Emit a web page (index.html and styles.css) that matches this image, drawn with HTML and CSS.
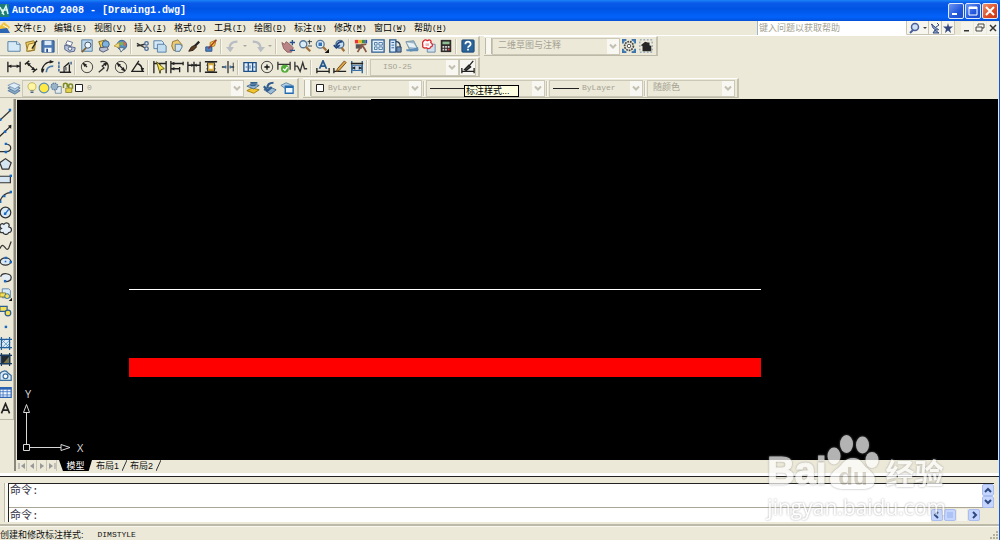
FILE: index.html
```html
<!DOCTYPE html>
<html lang="zh-CN">
<head>
<meta charset="utf-8">
<title>AutoCAD 2008 - [Drawing1.dwg]</title>
<link rel="stylesheet" href="styles.css">
</head>
<body>
<svg class="sprite" aria-hidden="true">
  <symbol id="new" viewBox="0 0 16 16"><path d="M1 3h10l4 3v8H1z" fill="#d6e9f7" stroke="#4a78a0"/><path d="M11 3v3h4" fill="#fff" stroke="#4a78a0"/></symbol>
  <symbol id="open" viewBox="0 0 16 16"><path d="M2 4l9-2 2 3-1 8-8 1z" fill="#f3cf62" stroke="#8a6d1c"/><path d="M5 6l8-2-3 9-7 1z" fill="#ffe9a0" stroke="#8a6d1c"/><path d="M12 5l3-3M9 11l4-6" stroke="#222" stroke-width="1.5"/></symbol>
  <symbol id="save" viewBox="0 0 16 16"><path d="M1 2h14v13H1z" fill="#4c78b4" stroke="#29508a"/><path d="M4 2h8v5H4z" fill="#dbe8f6"/><path d="M4 10h8v5H4z" fill="#eef4fa"/><path d="M6 11h2v4H6z" fill="#29508a"/></symbol>
  <symbol id="print" viewBox="0 0 16 16"><path d="M5 2l6 2-2 4-6-2z" fill="#fff" stroke="#55658a"/><path d="M2 7l8 2 4 1-1 4-6 1-5-3z" fill="#b9c4dd" stroke="#4b5b82"/><circle cx="8" cy="11" r="2" fill="#fff" stroke="#4b5b82"/></symbol>
  <symbol id="preview" viewBox="0 0 16 16"><path d="M2 1h12v13H2z" fill="#bcd8ee" stroke="#4a78a0"/><circle cx="9" cy="7" r="3.500" fill="#eef7ff" stroke="#345"/><path d="M7 10l-5 5" stroke="#806030" stroke-width="2"/></symbol>
  <symbol id="publish" viewBox="0 0 16 16"><path d="M2 3l8-2 3 7-8 3z" fill="#f4cd4b" stroke="#746020"/><circle cx="10" cy="6" r="4" fill="#7fb2dc" stroke="#2c5686"/><path d="M3 10l8-1 2 3-6 3-4-2z" fill="#b7bfd0" stroke="#46506e"/></symbol>
  <symbol id="globe" viewBox="0 0 16 16"><circle cx="9" cy="7" r="5.500" fill="#4f8fc8" stroke="#2b5a8c"/><path d="M7 3l4 1-1 4-4-2z" fill="#7ab35b"/><path d="M10 2l4 3-2 4z" fill="#d96a4a"/><path d="M0 8l6-4v6z" fill="#f5dc7a" stroke="#b59a3a"/><path d="M6 10l6 0-4 5z" fill="#eef3f8" stroke="#567"/></symbol>
  <symbol id="cut" viewBox="0 0 16 16"><path d="M1 5l9 5M1 8l9-2" stroke="#333" stroke-width="1.500"/><circle cx="12" cy="5" r="2" fill="none" stroke="#4a6a9a" stroke-width="1.500"/><circle cx="12" cy="11" r="2" fill="none" stroke="#4a6a9a" stroke-width="1.500"/></symbol>
  <symbol id="copy" viewBox="0 0 16 16"><path d="M1 2h9l2 2v7H1z" fill="#d6e9f7" stroke="#4a78a0"/><path d="M5 6h8l2 2v7H5z" fill="#c2dcf0" stroke="#4a78a0"/></symbol>
  <symbol id="paste" viewBox="0 0 16 16"><path d="M3 3l6-2 5 6-3 7-7-1-2-5z" fill="#edcb72" stroke="#8a6d2c"/><path d="M6 6h6l2 3-3 5H6z" fill="#cfe3f3" stroke="#4a78a0"/></symbol>
  <symbol id="brush" viewBox="0 0 16 16"><path d="M14 3L9 8" stroke="#222" stroke-width="2.500"/><path d="M9 7l2 2-4 4-5 1 3-5z" fill="#5b3d25" stroke="#2c1c10"/></symbol>
  <symbol id="block" viewBox="0 0 16 16"><path d="M7 4l7-3-2 7-5 1z" fill="#f9c33f" stroke="#ad711d"/><path d="M2 9h7v5H2z" fill="#4e83c2" stroke="#274c80"/><path d="M14 1L5 11" stroke="#933" stroke-width="1.500"/></symbol>
  <symbol id="undo" viewBox="0 0 16 16"><path d="M13 3C7 3 4 6 4 11" fill="none" stroke="#b9bcc3" stroke-width="2.500"/><path d="M0 9h9l-4 6z" fill="#b9bcc3"/></symbol>
  <symbol id="redo" viewBox="0 0 16 16"><path d="M2 3c6 0 9 3 9 8" fill="none" stroke="#b9bcc3" stroke-width="2.500"/><path d="M7 9h9l-5 6z" fill="#b9bcc3"/></symbol>
  <symbol id="pan" viewBox="0 0 16 16"><path d="M1 4l3 2 2-3 4 3 4 4-2 5H7L3 11z" fill="#b98484" stroke="#8b5a5f"/><path d="M13 1v6M10 4h6M10 13h6" stroke="#24518c" stroke-width="1.500"/></symbol>
  <symbol id="zoomrt" viewBox="0 0 16 16"><circle cx="6" cy="6" r="4" fill="#d9ecfa" stroke="#56779c" stroke-width="1.500"/><path d="M9 9l5 5" stroke="#a2713c" stroke-width="2.500"/><path d="M13 1v5M11 3h5M11 8h5" stroke="#234"/></symbol>
  <symbol id="zoomwin" viewBox="0 0 16 16"><circle cx="6" cy="6" r="4.500" fill="#d9ecfa" stroke="#56779c" stroke-width="1.500"/><path d="M4 4h4v4H4z" fill="#3873b4"/><path d="M9 9l4 4" stroke="#a2713c" stroke-width="2.500"/><path d="M16 11v5h-5z" fill="#111"/></symbol>
  <symbol id="zoomprev" viewBox="0 0 16 16"><circle cx="9" cy="6" r="4.500" fill="#c6def0" stroke="#4c6c92" stroke-width="1.500"/><path d="M12 3c-4 0-6 2-7 5M2 7l3 3 4-3" fill="none" stroke="#23477c" stroke-width="2"/><path d="M11 10l3 4" stroke="#a2713c" stroke-width="2.500"/></symbol>
  <symbol id="props" viewBox="0 0 16 16"><path d="M1 1h4v4H1z" fill="#e33"/><path d="M5 1h4v4H5z" fill="#e9b820"/><path d="M9 1h4v4H9z" fill="#3d8d48"/><path d="M13 1h2v4h-2z" fill="#34c"/><path d="M2 6h7v5H2z" fill="#555"/><path d="M4 15l5-8 3 4 2 4M8 7l6-1" stroke="#854" stroke-width="2" fill="none"/></symbol>
  <symbol id="dcenter" viewBox="0 0 16 16"><path d="M1 1h14v14H1z" fill="#e4f0fa" stroke="#2c5b90" stroke-width="1.500"/><path d="M4 4h3v3H4zM4 9h3v3H4zM9 4h4v3H9zM9 9h4v3H9z" fill="none" stroke="#44749f"/></symbol>
  <symbol id="palette" viewBox="0 0 16 16"><path d="M2 1h7v14H2z" fill="#d8e8f6" stroke="#2c5b90" stroke-width="1.500"/><path d="M4 4h3M4 7h3M4 10h3" stroke="#2c5b90"/><path d="M9 3c4 0 5 3 5 6" fill="none" stroke="#263b56" stroke-width="1.500"/><path d="M10 9h5v6h-5z" fill="#6d92bd" stroke="#263b56"/></symbol>
  <symbol id="sheet" viewBox="0 0 16 16"><path d="M1 3l9-1 5 10-9 2z" fill="#9db8c9" stroke="#748fa2"/><path d="M2 4l8 1 3 5-8-1z" fill="#e6f0f5"/><path d="M1 12l8-1 6-2v5H2z" fill="#5f8fb8"/></symbol>
  <symbol id="markup" viewBox="0 0 16 16"><path d="M6 6h9v9H6z" fill="#cedfee" stroke="#6383a4"/><path d="M2 2c2-2 4 0 4 0 3-2 5 0 4 2 3 2 2 5 0 5-1 3-4 2-5 1-3 1-5-1-4-3-1-2 0-4 1-5z" fill="#fff" stroke="#da2830" stroke-width="1.500"/><path d="M4 5h4v3H4z" fill="#f4b3b3"/></symbol>
  <symbol id="calc" viewBox="0 0 16 16"><path d="M2 1h12v14H2z" fill="#302c2b"/><path d="M4 3h8v3H4z" fill="#8ebf91"/><path d="M4 8h2v2H4zM7 8h2v2H7zM10 8h2v2h-2zM4 11h2v2H4zM7 11h2v2H7z" fill="#ddd"/><path d="M10 11h2v2h-2z" fill="#d44"/></symbol>
  <symbol id="help" viewBox="0 0 16 16"><rect x="1" y="1" width="14" height="14" rx="1" fill="#2b6499" stroke="#174574"/><path d="M5 6c0-4 6-4 6 0 0 2-3 2-3 4" fill="none" stroke="#fff" stroke-width="2"/><path d="M7 11h2v2H7z" fill="#fff"/></symbol>
  <symbol id="gear" viewBox="0 0 16 16"><path d="M1 5V1h4M11 1h4v4M15 11v4h-4M5 15H1v-4" fill="#6da0d0" stroke="#3d73ab" stroke-width="2"/><circle cx="8" cy="8" r="5" fill="#e8e6d8" stroke="#444" stroke-width="2" stroke-dasharray="2 1"/><circle cx="8" cy="8" r="2" fill="#fff" stroke="#444"/></symbol>
  <symbol id="home" viewBox="0 0 16 16"><path d="M1 1h14v14H1z" fill="none" stroke="#6083aa" stroke-dasharray="2 2"/><path d="M2 7l5-4 3 1h2v3l2 1v6H4V8z" fill="#262626"/></symbol>

  <symbol id="dlin" viewBox="0 0 16 16"><path d="M1 2v12M15 2v12M1 7h14" stroke="#222" stroke-width="1.500"/><path d="M1 7l4-2v4zM15 7l-4-2v4z" fill="#222"/></symbol>
  <symbol id="dali" viewBox="0 0 16 16"><path d="M1 5l5-4M10 14l5-4M3 3l10 9" stroke="#222" stroke-width="1.500"/><path d="M3 3l5 1-3 3zM13 12l-5-1 3-3z" fill="#222"/></symbol>
  <symbol id="darc" viewBox="0 0 16 16"><path d="M1 14C1 6 6 2 13 2" fill="none" stroke="#222" stroke-width="1.500"/><path d="M6 14c0-4 3-7 8-7" fill="none" stroke="#4a7cae" stroke-width="2"/><path d="M10 0l5 2-5 2zM0 10l2 5 2-5z" fill="#222"/></symbol>
  <symbol id="dord" viewBox="0 0 16 16"><path d="M2 14h13M7 13V8l6-5M13 5v8" fill="none" stroke="#222" stroke-width="1.500"/><path d="M1 2v11M15 2v3" fill="none" stroke="#55779e" stroke-width="2" stroke-dasharray="3 1"/><path d="M6 8h4v4H6z" fill="#777"/></symbol>
  <symbol id="drad" viewBox="0 0 16 16"><circle cx="8" cy="8" r="6.500" fill="none" stroke="#333"/><path d="M8 8L4 4" stroke="#222" stroke-width="1.500"/><path d="M3 3l5 2-3 3z" fill="#222"/></symbol>
  <symbol id="djog" viewBox="0 0 16 16"><path d="M4 2c8-2 11 5 7 11M2 14l6-5-2-2 5-4" fill="none" stroke="#333" stroke-width="1.500"/><path d="M12 3l-5 1 3 3z" fill="#222"/></symbol>
  <symbol id="ddia" viewBox="0 0 16 16"><circle cx="8" cy="8" r="6.500" fill="none" stroke="#333"/><path d="M4 4l8 8" stroke="#222" stroke-width="1.500"/><path d="M3 3l5 2-3 3zM13 13l-5-2 3-3z" fill="#222"/></symbol>
  <symbol id="dang" viewBox="0 0 16 16"><path d="M9 1L1 13h14M7 4c4 1 6 4 6 9" fill="none" stroke="#222" stroke-width="1.500"/><path d="M11 9l4 0-2 5z" fill="#222"/></symbol>
  <symbol id="dqui" viewBox="0 0 16 16"><path d="M1 1v14M15 1v14M8 5v10M1 4h14" stroke="#222" stroke-width="1.500"/><path d="M4 2l9 8-4 1-1 4z" fill="#f3e148" stroke="#5a5014"/></symbol>
  <symbol id="dbas" viewBox="0 0 16 16"><path d="M1 1v14M15 2v4M11 8v6M1 4h14M1 10h10" stroke="#222" stroke-width="1.500"/><path d="M1 4l4-2v4zM1 10l4-2v4z" fill="#222"/></symbol>
  <symbol id="dcon" viewBox="0 0 16 16"><path d="M1 2v12M8 2v12M15 2v12M1 6h14" stroke="#222" stroke-width="1.500"/><path d="M8 6L5 4v4zM8 6l3-2v4z" fill="#222"/></symbol>
  <symbol id="dspa" viewBox="0 0 16 16"><path d="M1 2h14M1 14h14M3 6h10M3 10h10" stroke="#222" stroke-width="1.500"/><path d="M4 3h8v10H4z" fill="#d7b04a" stroke="#333"/><path d="M6 6h4v4H6z" fill="#fff"/></symbol>
  <symbol id="dbrk" viewBox="0 0 16 16"><path d="M8 1v14M1 8h5M10 8h5" stroke="#333" stroke-width="1.500"/><path d="M2 8l4-2v4zM14 8l-4-2v4z" fill="#48739c"/><path d="M14 3v10" stroke="#333"/></symbol>
  <symbol id="tol" viewBox="0 0 16 16"><path d="M1 3h14v10H1zM6 3v10M11 3v10" fill="#e2effa" stroke="#1e5088" stroke-width="1.500"/><path d="M3 8h2M8 6v4M12 8h2" stroke="#1e5088"/></symbol>
  <symbol id="ctr" viewBox="0 0 16 16"><circle cx="8" cy="8" r="6.500" fill="none" stroke="#333"/><path d="M5 8h6M8 5v6" stroke="#111" stroke-width="1.500"/></symbol>
  <symbol id="insp" viewBox="0 0 16 16"><path d="M1 2v9M15 2v9M1 5h14" stroke="#333" stroke-width="1.500"/><circle cx="9" cy="10" r="4.500" fill="#52ae38"/><path d="M7 10l2 2 3-4" fill="none" stroke="#fff" stroke-width="1.500"/></symbol>
  <symbol id="jog" viewBox="0 0 16 16"><path d="M1 2v10M1 7h3l3 6 3-10 2 7h3" fill="none" stroke="#333" stroke-width="1.500"/></symbol>
  <symbol id="dedit" viewBox="0 0 16 16"><path d="M1 9v6M15 9v6M1 13h14" stroke="#222" stroke-width="1.500"/><path d="M4 10l4-9 4 9M5 7h6" fill="none" stroke="#24588f" stroke-width="2"/></symbol>
  <symbol id="dtedit" viewBox="0 0 16 16"><path d="M1 9v6M1 13h14" stroke="#222" stroke-width="1.500"/><path d="M13 1l2 2-8 9-3 1 1-3z" fill="#dba441" stroke="#69451c"/></symbol>
  <symbol id="dupd" viewBox="0 0 16 16"><path d="M2 1v14M14 1v14" stroke="#245f9a" stroke-width="1.500"/><path d="M1 4h14M4 9h8" stroke="#222" stroke-width="1.500"/><path d="M3 6h10v6H3z" fill="#c6dced" stroke="#245f9a"/><path d="M2 9l4-2v4zM14 9l-4-2v4z" fill="#222"/></symbol>
  <symbol id="dsty" viewBox="0 0 16 16"><path d="M1 9v6M15 9v6M1 13h14" stroke="#222" stroke-width="1.500"/><path d="M14 1L9 7M9 6l2 2-5 4-2-1z" fill="#555" stroke="#222" stroke-width="1.500"/></symbol>

  <symbol id="layers" viewBox="0 0 16 16"><path d="M1 11l7-3 7 3-6 4z" fill="#87a8c5" stroke="#58799b"/><path d="M1 8l7-3 7 3-6 4z" fill="#b4cfe4" stroke="#58799b"/><path d="M1 5l7-3 7 3-6 4z" fill="#e0edf6" stroke="#7998b5"/></symbol>
  <symbol id="laycur" viewBox="0 0 16 16"><path d="M1 11l6-3 8 2-6 4z" fill="#f3c62d" stroke="#987710"/><path d="M1 6l6-3 8 2-6 4z" fill="#9cbcd6" stroke="#45688c"/><path d="M5 2h8M5 5h6" stroke="#35618d" stroke-width="2"/></symbol>
  <symbol id="layprev" viewBox="0 0 16 16"><path d="M1 10l7-3 7 3-6 5z" fill="#9cbcd6" stroke="#45688c"/><path d="M12 2C7 2 5 4 5 8M1 6l4 5 5-4" fill="none" stroke="#315c8e" stroke-width="2.500"/></symbol>
  <symbol id="laystate" viewBox="0 0 16 16"><path d="M1 5l6-3 7 3-6 5z" fill="#b3cfe3" stroke="#5b81a4"/><path d="M6 6h9v8H6z" fill="#f2f8ff" stroke="#236baf" stroke-width="1.500"/><path d="M6 7h9" stroke="#236baf" stroke-width="2"/></symbol>
  <symbol id="bulb" viewBox="0 0 16 16"><path d="M5 11C0 5 4 1 8 1s8 4 3 10z" fill="#fff6a4" stroke="#b8a440"/><path d="M6 12h4M6 14h4" stroke="#4e6285" stroke-width="1.500"/></symbol>
  <symbol id="sun" viewBox="0 0 16 16"><circle cx="8" cy="8" r="6.500" fill="#ffe944" stroke="#5a8daf" stroke-width="1.500"/></symbol>
  <symbol id="sunvp" viewBox="0 0 16 16"><path d="M7 6h8v9H7z" fill="#e3ebf1" stroke="#61798f"/><circle cx="6" cy="6" r="4.500" fill="#98b2c6" stroke="#5a7ca0" stroke-width="1.500" stroke-dasharray="2 1"/></symbol>
  <symbol id="lock" viewBox="0 0 16 16"><path d="M2 8V4c0-3 5-3 5 0v3M9 8V5c0-3 5-3 5 0v4" fill="none" stroke="#7b8b22" stroke-width="2"/><path d="M5 8h8v6H5z" fill="#e2d348" stroke="#817923"/></symbol>
  <symbol id="swatch" viewBox="0 0 10 10"><path d="M1.500 1.500h7v7h-7z" fill="#fff" stroke="#222"/></symbol>
  <symbol id="chev" viewBox="0 0 10 10"><path d="M2 3l3 3 3-3" fill="none" stroke="currentColor" stroke-width="2"/></symbol>

  <symbol id="line" viewBox="0 0 16 16"><path d="M1 15L14 3" stroke="#333" stroke-width="1.500"/><path d="M12 1h3v3h-3zM0 13h3v3H0z" fill="#1769c2"/></symbol>
  <symbol id="xline" viewBox="0 0 16 16"><path d="M0 16L15 2" stroke="#222" stroke-width="1.500"/><path d="M15 1v5l-4-4z" fill="#222"/><path d="M6 8h3v3H6z" fill="#1769c2"/></symbol>
  <symbol id="pline" viewBox="0 0 16 16"><path d="M0 13h9c7 0 7-8 1-9" fill="none" stroke="#333" stroke-width="1.500"/><path d="M7 2h3v3H7zM7 12h3v3H7z" fill="#1769c2"/></symbol>
  <symbol id="poly" viewBox="0 0 16 16"><path d="M8 2l7 5-3 8H4L1 7z" fill="#d5e5f1" stroke="#333" stroke-width="1.500"/></symbol>
  <symbol id="rect" viewBox="0 0 16 16"><path d="M0 4h14v8H0z" fill="#d5e5f1" stroke="#333" stroke-width="1.500"/><path d="M13 2h3v3h-3z" fill="#1769c2"/></symbol>
  <symbol id="arc" viewBox="0 0 16 16"><path d="M1 16C2 8 6 4 15 3" fill="none" stroke="#333" stroke-width="1.500"/><path d="M13 1h3v3h-3zM5 6h3v3H5zM0 13h3v3H0z" fill="#1769c2"/></symbol>
  <symbol id="circle" viewBox="0 0 16 16"><circle cx="8" cy="8" r="6.500" fill="#d9eaf6" stroke="#333" stroke-width="1.500"/><path d="M8 9l4-5" stroke="#1769c2" stroke-width="1.500"/><path d="M6 8h3v3H6z" fill="#1769c2"/></symbol>
  <symbol id="cloud" viewBox="0 0 16 16"><path d="M3 8C-1 5 3 0 6 3c3-4 8-1 6 3 5 1 4 7 0 7-2 4-7 2-7 0-5 1-5-4-2-5z" fill="#e4eef6" stroke="#333" stroke-width="1.500"/></symbol>
  <symbol id="spline" viewBox="0 0 16 16"><path d="M1 12C6 0 8 18 12 11l3-8" fill="none" stroke="#333" stroke-width="1.500"/></symbol>
  <symbol id="ellipse" viewBox="0 0 16 16"><ellipse cx="8" cy="8" rx="6.500" ry="4.500" fill="#dbe9f4" stroke="#333" stroke-width="1.500"/><path d="M7 2h3v3H7zM13 7h3v3h-3zM7 7h2v2H7z" fill="#1769c2"/></symbol>
  <symbol id="earc" viewBox="0 0 16 16"><path d="M2 7c2-6 13-4 13 1 0 4-4 5-7 5" fill="#e4eef6" stroke="#333" stroke-width="1.500"/><path d="M6 11h3v3H6z" fill="#1769c2"/></symbol>
  <symbol id="insert" viewBox="0 0 16 16"><path d="M4 1h8l2 2v9H4z" fill="#d6e9f7" stroke="#4a78a0"/><path d="M1 6h7v5H1z" fill="#f5df56" stroke="#796e24"/><circle cx="10" cy="10" r="3" fill="#f5df56" stroke="#1b62a2"/><path d="M16 12v4h-4z" fill="#111"/></symbol>
  <symbol id="mkblock" viewBox="0 0 16 16"><path d="M1 3h9v6H1z" fill="#f5df56" stroke="#2e608e" stroke-width="1.500"/><circle cx="11" cy="11" r="3.500" fill="#f5df56" stroke="#2e608e" stroke-width="1.500"/></symbol>
  <symbol id="point" viewBox="0 0 16 16"><path d="M7 7h3v3H7z" fill="#1769c2"/></symbol>
  <symbol id="hatch" viewBox="0 0 16 16"><path d="M2 2h12v12H2z" fill="#dcebf7"/><path d="M3 14L14 3M2 9l7-7M7 14l7-7M3 3l11 11" stroke="#5d92c2"/><path d="M3 0v16M13 0v16M0 3h16M0 13h16" stroke="#245f9a" stroke-width="1.500"/></symbol>
  <symbol id="grad" viewBox="0 0 16 16"><path d="M2 2h12v12H2z" fill="#232931"/><path d="M13 4v9H5z" fill="#7d7748"/><path d="M3 0v16M13 0v16M0 3h16M0 13h16" stroke="#173b62" stroke-width="1.500"/></symbol>
  <symbol id="region" viewBox="0 0 16 16"><path d="M1 14V6c2-4 8-5 10-1l4 3v6z" fill="#dbeaf6" stroke="#386c9b" stroke-width="1.500"/><circle cx="8" cy="9" r="3" fill="#fff" stroke="#386c9b" stroke-width="1.500"/></symbol>
  <symbol id="table" viewBox="0 0 16 16"><path d="M1 2h14v12H1z" fill="#f2f7ff" stroke="#2c63b0" stroke-width="1.500"/><path d="M1 3h14" stroke="#2c63b0" stroke-width="3"/><path d="M1 7h14M1 11h14M5 4v10M10 4v10" stroke="#3a70c0"/></symbol>
  <symbol id="mtext" viewBox="0 0 16 16"><path d="M3 14L8 2l5 12M5 10h6" fill="none" stroke="#222" stroke-width="2"/></symbol>
</svg>

<header class="titlebar">
  <svg class="app-icon" viewBox="0 0 12 14" aria-hidden="true"><path d="M0 0h9v13H0z" fill="#1b7d73"/><path d="M0 3l4 8M2 10l4-8 2 8M1 6h7" stroke="#d9f5ef" stroke-width="1.500" fill="none"/></svg>
  <h1 class="title">AutoCAD 2008 - [Drawing1.dwg]</h1>
  <div class="win-buttons">
    <button class="win" aria-label="最小化"><svg viewBox="0 0 14 14"><path d="M3 9h5v2H3z" fill="#fff"/></svg></button>
    <button class="win" aria-label="最大化"><svg viewBox="0 0 14 14"><path d="M3 3h8v8H3z" fill="none" stroke="#fff"/><path d="M3 3h8v2H3z" fill="#fff"/></svg></button>
    <button class="win win-close" aria-label="关闭"><svg viewBox="0 0 14 14"><path d="M3 3l8 8M11 3l-8 8" stroke="#fff" stroke-width="2"/></svg></button>
  </div>
</header>

<div class="frame">
<nav class="menubar">
  <svg class="doc-icon" viewBox="0 0 12 14" aria-hidden="true"><path d="M0 5l4-4 6 5-3 4-7 1z" fill="#f1c33a"/><path d="M0 8l7-1 3 5H0z" fill="#2c66b5"/><path d="M3 4l5 3" stroke="#fff"/></svg>
  <div class="menus">
    <button>文件<span>(<u>F</u>)</span></button><button>编辑<span>(<u>E</u>)</span></button><button>视图<span>(<u>V</u>)</span></button><button>插入<span>(<u>I</u>)</span></button><button>格式<span>(<u>O</u>)</span></button><button>工具<span>(<u>T</u>)</span></button><button>绘图<span>(<u>D</u>)</span></button><button>标注<span>(<u>N</u>)</span></button><button>修改<span>(<u>M</u>)</span></button><button>窗口<span>(<u>W</u>)</span></button><button>帮助<span>(<u>H</u>)</span></button>
  </div>
  <input class="ask" type="text" placeholder="键入问题以获取帮助" aria-label="键入问题以获取帮助">
  <div class="info">
    <button class="info-search" aria-label="搜索"><svg viewBox="0 0 20 12"><circle cx="7" cy="5" r="3.500" fill="#cfe0f4" stroke="#4a609c" stroke-width="1.500"/><path d="M5 8l-3 3" stroke="#4a609c" stroke-width="2"/><path d="M15 5h4l-2 2z" fill="#444"/></svg></button>
    <button aria-label="通讯中心"><svg viewBox="0 0 12 12"><path d="M2 2l8 6M3 2c0 4 2 6 6 6M6 8l-2 3h6z" fill="#8ba0c4" stroke="#344c85"/><path d="M8 1l2 2-3 2" fill="none" stroke="#344c85"/></svg></button>
    <button aria-label="收藏夹"><svg viewBox="0 0 12 12"><path d="M6 1l1 3.500h4L8 7l1 4-3-2.500L3 11l1-4-3-2.500h4z" fill="#31477e"/></svg></button>
  </div>
  <div class="mdi">
    <button aria-label="最小化图形"><svg viewBox="0 0 12 12"><path d="M3 8h5v1.500H3z" fill="#333"/></svg></button>
    <button aria-label="还原图形"><svg viewBox="0 0 12 12"><path d="M4 4V2h6v4H8M2 5h6v4H2z" fill="none" stroke="#444"/></svg></button>
    <button aria-label="关闭图形"><svg viewBox="0 0 12 12"><path d="M3 3l6 6M9 3L3 9" stroke="#333" stroke-width="1.500"/></svg></button>
  </div>
</nav>

<div class="dock">
  <div class="bar">
    <div class="tools">
      <button aria-label="新建"><svg><use href="#new"/></svg></button><button aria-label="打开"><svg><use href="#open"/></svg></button><button aria-label="保存"><svg><use href="#save"/></svg></button><i class="sep"></i>
      <button aria-label="打印"><svg><use href="#print"/></svg></button><button aria-label="打印预览"><svg><use href="#preview"/></svg></button><button aria-label="发布"><svg><use href="#publish"/></svg></button><button aria-label="三维 DWF"><svg><use href="#globe"/></svg></button><i class="sep"></i>
      <button aria-label="剪切"><svg><use href="#cut"/></svg></button><button aria-label="复制"><svg><use href="#copy"/></svg></button><button aria-label="粘贴"><svg><use href="#paste"/></svg></button><button aria-label="特性匹配"><svg><use href="#brush"/></svg></button><button aria-label="块编辑器"><svg><use href="#block"/></svg></button><i class="sep"></i>
      <button aria-label="放弃"><svg><use href="#undo"/></svg></button><button class="caret" aria-label="放弃列表"></button><button aria-label="重做"><svg><use href="#redo"/></svg></button><button class="caret" aria-label="重做列表"></button><i class="sep"></i>
      <button aria-label="实时平移"><svg><use href="#pan"/></svg></button><button aria-label="实时缩放"><svg><use href="#zoomrt"/></svg></button><button aria-label="窗口缩放"><svg><use href="#zoomwin"/></svg></button><button aria-label="缩放上一个"><svg><use href="#zoomprev"/></svg></button><i class="sep"></i>
      <button aria-label="特性"><svg><use href="#props"/></svg></button><button aria-label="设计中心"><svg><use href="#dcenter"/></svg></button><button aria-label="工具选项板"><svg><use href="#palette"/></svg></button><button aria-label="图纸集"><svg><use href="#sheet"/></svg></button><button aria-label="标记集"><svg><use href="#markup"/></svg></button><button aria-label="计算器"><svg><use href="#calc"/></svg></button><i class="sep"></i>
      <button aria-label="帮助"><svg><use href="#help"/></svg></button>
    </div>
    <div class="tools grip">
      <span class="combo combo-workspace"><select aria-label="工作空间" disabled><option>二维草图与注释</option></select><svg class="drop"><use href="#chev"/></svg></span>
      <button aria-label="工作空间设置"><svg><use href="#gear"/></svg></button><button aria-label="我的工作空间"><svg><use href="#home"/></svg></button>
    </div>
  </div>

  <div class="bar">
    <div class="tools">
      <button aria-label="线性"><svg><use href="#dlin"/></svg></button><button aria-label="对齐"><svg><use href="#dali"/></svg></button><button aria-label="弧长"><svg><use href="#darc"/></svg></button><button aria-label="坐标"><svg><use href="#dord"/></svg></button><i class="sep"></i>
      <button aria-label="半径"><svg><use href="#drad"/></svg></button><button aria-label="折弯"><svg><use href="#djog"/></svg></button><button aria-label="直径"><svg><use href="#ddia"/></svg></button><button aria-label="角度"><svg><use href="#dang"/></svg></button><i class="sep"></i>
      <button aria-label="快速标注"><svg><use href="#dqui"/></svg></button><button aria-label="基线"><svg><use href="#dbas"/></svg></button><button aria-label="连续"><svg><use href="#dcon"/></svg></button><button aria-label="标注间距"><svg><use href="#dspa"/></svg></button><button aria-label="标注打断"><svg><use href="#dbrk"/></svg></button><i class="sep"></i>
      <button aria-label="公差"><svg><use href="#tol"/></svg></button><button aria-label="圆心标记"><svg><use href="#ctr"/></svg></button><button aria-label="检验"><svg><use href="#insp"/></svg></button><button aria-label="折弯线性"><svg><use href="#jog"/></svg></button><i class="sep"></i>
      <button aria-label="编辑标注"><svg><use href="#dedit"/></svg></button><button aria-label="编辑标注文字"><svg><use href="#dtedit"/></svg></button><button aria-label="标注更新"><svg><use href="#dupd"/></svg></button><i class="sep"></i>
      <span class="combo combo-dim"><select aria-label="标注样式控制" disabled><option>ISO-25</option></select><svg class="drop"><use href="#chev"/></svg></span>
      <button class="hot" aria-label="标注样式"><svg><use href="#dsty"/></svg></button>
    </div>
  </div>

  <div class="bar">
    <div class="tools">
      <button aria-label="图层特性管理器"><svg><use href="#layers"/></svg></button>
      <span class="combo combo-layer"><svg><use href="#bulb"/></svg><svg><use href="#sun"/></svg><svg><use href="#sunvp"/></svg><svg><use href="#lock"/></svg><svg class="small"><use href="#swatch"/></svg><select aria-label="图层" disabled><option>0</option></select><svg class="drop"><use href="#chev"/></svg></span>
      <button aria-label="置为当前图层"><svg><use href="#laycur"/></svg></button><button aria-label="上一个图层"><svg><use href="#layprev"/></svg></button><button aria-label="图层状态"><svg><use href="#laystate"/></svg></button>
    </div>
    <div class="tools grip">
      <span class="combo combo-color"><svg class="small"><use href="#swatch"/></svg><select aria-label="颜色" disabled><option>ByLayer</option></select><svg class="drop"><use href="#chev"/></svg></span>
      <i class="sep"></i>
      <span class="combo combo-ltype"><i class="rule rule-long"></i><select aria-label="线型" disabled><option></option></select><svg class="drop"><use href="#chev"/></svg><span class="tooltip" role="tooltip">标注样式...</span></span>
      <i class="sep"></i>
      <span class="combo combo-lweight"><i class="rule"></i><select aria-label="线宽" disabled><option>ByLayer</option></select><svg class="drop"><use href="#chev"/></svg></span>
      <i class="sep"></i>
      <span class="combo combo-plot"><select aria-label="打印样式" disabled><option>随颜色</option></select><svg class="drop"><use href="#chev"/></svg></span>
    </div>
  </div>
</div>

<main class="work">
  <aside class="side">
    <div class="draw">
      <button aria-label="直线"><svg><use href="#line"/></svg></button>
      <button aria-label="构造线"><svg><use href="#xline"/></svg></button>
      <button aria-label="多段线"><svg><use href="#pline"/></svg></button>
      <button aria-label="正多边形"><svg><use href="#poly"/></svg></button>
      <button aria-label="矩形"><svg><use href="#rect"/></svg></button>
      <button aria-label="圆弧"><svg><use href="#arc"/></svg></button>
      <button aria-label="圆"><svg><use href="#circle"/></svg></button>
      <button aria-label="修订云线"><svg><use href="#cloud"/></svg></button>
      <button aria-label="样条曲线"><svg><use href="#spline"/></svg></button>
      <button aria-label="椭圆"><svg><use href="#ellipse"/></svg></button>
      <button aria-label="椭圆弧"><svg><use href="#earc"/></svg></button>
      <button aria-label="插入块"><svg><use href="#insert"/></svg></button>
      <button aria-label="创建块"><svg><use href="#mkblock"/></svg></button>
      <button aria-label="点"><svg><use href="#point"/></svg></button>
      <button aria-label="图案填充"><svg><use href="#hatch"/></svg></button>
      <button aria-label="渐变色"><svg><use href="#grad"/></svg></button>
      <button aria-label="面域"><svg><use href="#region"/></svg></button>
      <button aria-label="表格"><svg><use href="#table"/></svg></button>
      <button aria-label="多行文字"><svg><use href="#mtext"/></svg></button>
    </div>
  </aside>
  <section class="view">
    <div class="canvas">
      <svg class="drawing" role="img" aria-label="图形">
        <path d="M0 0h354" stroke="#c8c6bc" stroke-width="2"/>
        <path d="M112 190.500h632" stroke="#fff"/>
        <path d="M112 259h632v19H112z" fill="#f00"/>
      </svg>
      <svg class="ucs" viewBox="0 0 70 74" role="img" aria-label="坐标系">
        <g fill="none" stroke="#d8d8d8"><path d="M6.500 58.500h6v6h-6zM9.500 58V27M13 61.500h31M9.500 18.500l-3 8h6zM53 61.500l-9-3v6z"/></g>
        <text x="8" y="12">Y</text><text x="60" y="66">X</text>
      </svg>
    </div>
    <div class="tabs">
      <div class="tab-nav">
        <button aria-label="第一个"><svg viewBox="0 0 10 10"><path d="M2 2v6" stroke="#999"/><path d="M8 2v6L4 5z" fill="#999"/></svg></button><button aria-label="上一个"><svg viewBox="0 0 10 10"><path d="M7 2v6L3 5z" fill="#999"/></svg></button><button aria-label="下一个"><svg viewBox="0 0 10 10"><path d="M3 2v6l4-3z" fill="#999"/></svg></button><button aria-label="最后一个"><svg viewBox="0 0 10 10"><path d="M8 2v6" stroke="#999"/><path d="M2 2v6l4-3z" fill="#999"/></svg></button>
      </div>
      <button class="tab tab-on">模型</button>
      <button class="tab">布局1</button><svg class="slash" viewBox="0 0 5 11"><path d="M0 11L5 0" stroke="#333"/></svg>
      <button class="tab">布局2</button><svg class="slash" viewBox="0 0 5 11"><path d="M0 11L5 0" stroke="#333"/></svg>
    </div>
  </section>
</main>

<section class="command">
  <div class="cmd-box">
    <div class="history"><p>命令:</p>
      <div class="vscroll"><button class="scroll" aria-label="向上"><svg viewBox="0 0 10 10"><path d="M2 7l3-3 3 3" fill="none" stroke="#2c4a80" stroke-width="2"/></svg></button><button class="scroll" aria-label="向下"><svg viewBox="0 0 10 10"><path d="M2 3l3 3 3-3" fill="none" stroke="#2c4a80" stroke-width="2"/></svg></button></div>
    </div>
    <div class="prompt"><label for="cmd">命令:</label><input id="cmd" type="text">
      <div class="hscroll"><button class="scroll" aria-label="向左"><svg viewBox="0 0 10 10"><path d="M6 2L3 5l3 3" fill="none" stroke="#2c4a80" stroke-width="2"/></svg></button><button class="scroll" aria-label="滑块"><svg viewBox="0 0 10 10"><path d="M3 2v6M5 2v6M7 2v6" stroke="#95b0ee"/></svg></button><i class="track"></i><button class="scroll" aria-label="向右"><svg viewBox="0 0 10 10"><path d="M4 2l3 3-3 3" fill="none" stroke="#2c4a80" stroke-width="2"/></svg></button></div>
    </div>
  </div>
</section>

<footer class="status"><span>创建和修改标注样式:</span><span class="mono">DIMSTYLE</span>
  <svg class="size-grip" viewBox="0 0 10 10" aria-hidden="true"><path d="M7 1h2v2H7zM4 4h2v2H4zM7 4h2v2H7zM1 7h2v2H1zM4 7h2v2H4zM7 7h2v2H7z" fill="#b5b19c"/></svg>
</footer>
</div>

<div class="watermark" aria-hidden="true">
  <div class="brand"><span class="latin">Bai</span>
    <svg class="paw" viewBox="0 0 54 56"><g fill="#fff"><ellipse cx="8" cy="22" rx="6.500" ry="8.500"/><ellipse cx="20.500" cy="10" rx="6.500" ry="9"/><ellipse cx="36.500" cy="11" rx="6.500" ry="8.500"/><ellipse cx="46" cy="26" rx="6.500" ry="8"/><path d="M27 24c8 0 9 6 14 10 6 5 10 9 7 16-3 6-12 5-21 5S9 56 5 50c-3-7 1-12 7-16 5-4 7-10 15-10z"/></g><text x="27" y="51">du</text></svg>
    <span class="han">经验</span></div>
  <div class="url">jingyan.baidu.com</div>
</div>
</body>
</html>
```
FILE: styles.css
```css
* { box-sizing: border-box; }
body {
  margin: 0;
  min-height: 100vh;
  display: flex;
  flex-direction: column;
  overflow: hidden;
  position: relative;
  background: #ece9d8;
  color: #111;
  font: 9px/12px "Liberation Sans", "Noto Sans CJK SC", sans-serif;
}
button, input, select {
  font: inherit;
  color: inherit;
  border: 0;
  padding: 0;
  margin: 0;
  background: none;
  border-radius: 0;
}
button { display: flex; align-items: center; justify-content: center; }
.sprite { display: none; }

/* Title bar */
.titlebar {
  height: 21px;
  display: flex;
  align-items: center;
  flex: none;
  background: linear-gradient(#1c84f8 0, #0a5ae8 3px, #0054e3 9px, #0262fb 17px, #0450d8 21px);
}
.app-icon { width: 12px; height: 14px; }
.title {
  flex: 1;
  margin: 0;
  font: bold 10px/20px "Liberation Mono", monospace;
  color: #fff;
}
.win-buttons { display: flex; gap: 1px; padding-right: 2px; }
.win {
  width: 16px;
  height: 16px;
  border: 1px solid #dfe9fc;
  border-radius: 2px;
  background: linear-gradient(135deg, #6e96f4, #2157dc 60%, #1c4cc8);
}
.win svg { width: 14px; height: 14px; flex: none; }
.win-close { background: linear-gradient(135deg, #f0936c, #dd4a22 60%, #c63a14); }

.frame {
  flex: 1;
  display: flex;
  flex-direction: column;
  border-right: 1px solid #1556d8;
}

/* Menu bar */
.menubar {
  height: 15px;
  flex: none;
  display: flex;
  border-bottom: 1px solid #fff;
}
.doc-icon { width: 12px; height: 14px; }
.menus { flex: 1; display: flex; }
.menus button { width: 40px; justify-content: flex-start; padding-left: 2px; color: #000; }
.menus span { font: 8px/12px "Liberation Mono", monospace; }
.ask { width: 149px; background: #fff; border-left: 1px solid #9db6cc; padding-left: 1px; }
.ask::placeholder { color: #a29f90; opacity: 1; }
.info { display: flex; border: 1px solid #c9c5b2; border-top: 0; border-radius: 0 0 2px 2px; background: #f6f5ee; }
.info button { width: 13px; border-left: 1px solid #c9c5b2; }
.info .info-search { width: 21px; border-left: 0; }
.info svg { height: 12px; width: 12px; flex: none; }
.info .info-search svg { width: 20px; }
.mdi { display: flex; gap: 1px; padding: 1px 0 1px 6px; }
.mdi button { width: 12px; background: #f5f4ec; }
.mdi svg { width: 12px; height: 12px; }

/* Toolbars */
.dock { flex: none; display: flex; flex-direction: column; }
.bar { display: flex; gap: 4px; height: 21px; }
.tools {
  display: flex;
  align-items: center;
  height: 20px;
  padding: 0 2px 0 5px;
  border-top: 1px solid #fff;
  border-right: 2px solid #c5c2b0;
  border-bottom: 1px solid #bcb9a8;
}
.grip { padding-left: 8px; position: relative; }
.grip::before {
  content: "";
  position: absolute;
  left: 1px;
  top: 1px;
  bottom: 1px;
  width: 5px;
  border: 1px solid #bcb9a8;
  border-width: 0 1px;
  background: #f8f7f0;
}
.tools button { width: 17px; height: 17px; }
.tools svg { width: 14px; height: 14px; flex: none; }
.tools .caret { width: 8px; }
.caret::after { content: ""; border: 2px solid transparent; border-top-color: #aaa79a; margin-top: 2px; }
.sep { width: 2px; height: 15px; margin: 0 2px 0 1px; border-left: 1px solid #c8c5b4; border-right: 1px solid #f8f7f0; }
.grip .sep { margin: 0 1px; }
.tools .hot { background: #f7f6f0; border: 1px solid #c6c3b2; }
.combo {
  position: relative;
  display: flex;
  align-items: center;
  height: 17px;
  padding-left: 3px;
  border: 1px solid #cbc8b8;
  color: #a5a294;
}
.combo select {
  flex: 1;
  min-width: 0;
  appearance: none;
  opacity: 1;
  padding-left: 3px;
  font: 8px/12px "Liberation Mono", "Noto Sans CJK SC", monospace;
  color: #a5a294;
}
.tools .drop { width: 12px; height: 15px; padding: 2px 1px; background: #f8f7f2; color: #c3c0b2; }
.tools .combo svg:not(.drop) { width: 12px; height: 12px; }
.tools .combo svg.small:not(.drop) { width: 10px; height: 10px; }
.combo-workspace { width: 128px; }
.combo-workspace select, .combo-plot select { font-size: 9px; padding-left: 2px; }
.combo-dim { width: 89px; }
.combo-dim select { padding-left: 9px; }
.combo-layer { width: 222px; }
.combo-color { width: 111px; }
.combo-ltype { width: 119px; }
.combo-lweight { width: 94px; }
.combo-plot { width: 88px; }
.rule { width: 26px; height: 1px; background: #222; }
.rule-long { width: 36px; }
.tooltip {
  position: absolute;
  left: 37px;
  top: 4px;
  z-index: 2;
  width: 55px;
  height: 12px;
  padding-left: 1px;
  border: 1px solid #000;
  background: #ffffe1;
  color: #000;
  line-height: 10px;
  white-space: nowrap;
}

/* Drawing area */
.work { flex: 1; display: flex; padding-right: 1px; }
.side { width: 16px; flex: none; border-right: 2px solid #8a877a; }
.draw {
  width: 14px;
  padding: 7px 0 3px;
  border-right: 1px solid #bcb9a8;
  border-bottom: 1px solid #bcb9a8;
}
.draw button { width: 10px; height: 16px; }
.draw button:nth-child(3n) { margin-top: 1px; }
.draw svg { width: 13px; height: 13px; flex: none; }
.view { flex: 1; display: flex; flex-direction: column; }
.canvas { flex: 1; display: flex; background: #000; position: relative; margin-left: 1px; }
.drawing { width: 100%; height: 100%; position: absolute; left: 0; top: 0; }
.ucs { width: 70px; height: 74px; align-self: flex-end; position: relative; }
.ucs text { fill: #d8d8d8; font: 11px "Open Sans", sans-serif; }
.tabs { height: 11px; display: flex; padding-left: 1px; }
.tab-nav { display: flex; margin-right: 2px; }
.tab-nav button { width: 10px; border-right: 1px solid #c8c5b4; }
.tab-nav svg { width: 10px; height: 10px; flex: none; }
.tab { padding: 0 3px; line-height: 10px; }
.tab-on {
  width: 33px;
  margin-right: 1px;
  background: #000;
  color: #fff;
  clip-path: polygon(0 0, 100% 0, 90% 100%, 12% 100%);
}
.slash { width: 5px; height: 11px; }

/* Command window */
.command {
  flex: none;
  margin-top: 2px;
  padding: 7px 5px 2px 1px;
  border-top: 3px solid #fff;
  border-bottom: 2px solid #bcb9a8;
  box-shadow: inset 0 1px #222;
}
.cmd-box {
  border-top: 1px solid #222;
  border-left: 1px solid #222;
  margin-left: 7px;
  background: #fff;
  font: 11px/16px "Liberation Mono", "Noto Sans CJK SC", monospace;
  color: #334;
  box-shadow: -3px 0 #f8f7f0, -4px 0 #bcb9a8;
}
.cmd-box p { margin: 0; line-height: 14px; flex: 1; }
.history { display: flex; height: 24px; padding-left: 1px; border-bottom: 1px solid #aaa797; }
.prompt { display: flex; height: 14px; padding-left: 1px; }
.prompt input { flex: 1; min-width: 0; outline: 0; }
.scroll { width: 12px; height: 12px; border: 1px solid #a9bdf0; border-radius: 2px; background: #c5d5fd; flex: none; }
.scroll svg { width: 10px; height: 10px; flex: none; }
.vscroll { width: 12px; display: flex; flex-direction: column; }
.hscroll { display: flex; align-items: center; gap: 1px; width: 63px; background: #ece9d8; }
.track { width: 10px; height: 12px; background: #f5f4ef; }

/* Status bar */
.status { height: 14px; flex: none; display: flex; align-items: center; gap: 14px; padding-top: 3px; border-top: 1px solid #f8f7f0; }
.mono { font: 8px/10px "Liberation Mono", monospace; flex: 1; }
.size-grip { width: 10px; height: 10px; }

/* Watermark */
.watermark { position: absolute; right: 54px; bottom: 20px; color: #fff; opacity: 0.7; filter: drop-shadow(0 0 1px #888); pointer-events: none; }
.brand { display: flex; align-items: flex-end; height: 56px; margin-bottom: 4px; }
.latin { font: bold 38px/38px "Liberation Sans", sans-serif; -webkit-text-stroke: 1px #fff; }
.paw { width: 54px; height: 56px; }
.paw text { font: bold 24px "Liberation Sans", sans-serif; text-anchor: middle; fill: #c9c6ba; }
.han { font: bold 29px/36px "Noto Sans CJK SC", sans-serif; margin-left: 5px; }
.url { font: 21px/26px "Open Sans", sans-serif; }
```
